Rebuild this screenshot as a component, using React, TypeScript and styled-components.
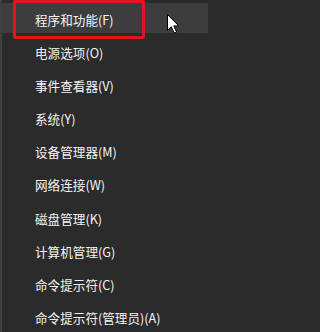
import React from 'react';
import styled, { createGlobalStyle } from 'styled-components';

const items = [
	'程序和功能(F)',
	'电源选项(O)',
	'事件查看器(V)',
	'系统(Y)',
	'设备管理器(M)',
	'网络连接(W)',
	'磁盘管理(K)',
	'计算机管理(G)',
	'命令提示符(C)',
	'命令提示符(管理员)(A)',
];

const GlobalStyle = createGlobalStyle`
	html, body {
		margin: 0;
		padding: 0;
		background: #2b2b2b;
	}
`;

const Menu = styled.ul`
	list-style: none;
	margin: 0;
	padding: 3px 5px 3px 0;
	width: 213px;
	height: 332px;
	box-sizing: border-box;
	background: #2b2b2b;
	border-left: 2px solid #3f3f3f;
	display: flex;
	flex-direction: column;
	gap: 3.1px;
	font-family: 'Noto Sans CJK SC', 'Noto Sans', sans-serif;
	font-size: 12.6px;
	color: #f4f4f4;
	overflow: hidden;
`;

const Item = styled.li<{ $active?: boolean }>`
	position: relative;
	height: 30px;
	flex: none;
	box-sizing: border-box;
	padding: 3px 0 0 33px;
	display: flex;
	align-items: center;
	white-space: nowrap;
	background: ${(p) => (p.$active ? '#3d3d3d' : 'transparent')};
`;

const Mark = styled.span`
	position: absolute;
	left: 11px;
	top: -3px;
	width: 132px;
	height: 39px;
	box-sizing: border-box;
	border: 3px solid #e3141b;
	border-radius: 2px;
	pointer-events: none;
`;

const Cursor = styled.svg`
	position: absolute;
	left: 165px;
	top: 11px;
	width: 13px;
	height: 20px;
`;

const App: React.FC = () => {
	return (
		<>
			<GlobalStyle />
			<Menu>
				{items.map((label, i) => (
					<Item key={label} $active={i === 0}>
						{label}
						{i === 0 && (
							<>
								<Mark />
								<Cursor viewBox="0 0 13 20">
									<path
										d="M0.5 0.5 L0.5 16.5 L4.3 12.8 L7.2 19 L9.6 17.9 L6.8 11.9 L11.8 11.9 Z"
										fill="#ffffff"
										stroke="#000000"
										strokeWidth="1"
										strokeLinejoin="round"
									/>
								</Cursor>
							</>
						)}
					</Item>
				))}
			</Menu>
		</>
	);
};

export default App;
